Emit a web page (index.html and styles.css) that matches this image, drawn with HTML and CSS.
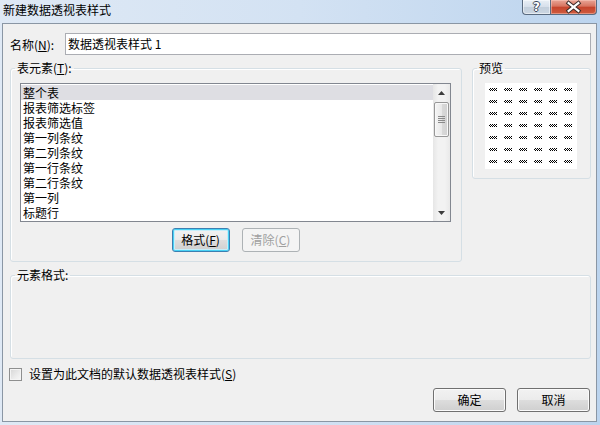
FILE: index.html
```html
<!DOCTYPE html>
<html lang="zh-CN">
<head>
<meta charset="utf-8">
<title>新建数据透视表样式</title>
<link rel="stylesheet" href="styles.css">
</head>
<body>
<div class="window">
  <div class="titlebar">
    <span class="title">新建数据透视表样式</span>
    <div class="caption">
      <div class="cap help"><span class="qmark">?</span></div>
      <div class="cap close">
        <svg width="46" height="14" viewBox="0 0 46 14">
          <path d="M18 3 L28 11 M28 3 L18 11" stroke="#3a2a28" stroke-width="4.2" stroke-linecap="square" fill="none"/>
          <path d="M18 3 L28 11 M28 3 L18 11" stroke="#ffffff" stroke-width="2.2" stroke-linecap="square" fill="none"/>
        </svg>
      </div>
    </div>
  </div>
  <div class="client">
    <div class="name-row">
      <span class="name-label">名称(<u>N</u>):</span>
      <div class="input">数据透视表样式 1</div>
    </div>
    <div class="groups">
      <fieldset class="grp elements">
        <legend>表元素(<u>T</u>):</legend>
        <div class="elements-body">
          <div class="listbox">
            <ul class="items">
              <li class="sel">整个表</li>
              <li>报表筛选标签</li>
              <li>报表筛选值</li>
              <li>第一列条纹</li>
              <li>第二列条纹</li>
              <li>第一行条纹</li>
              <li>第二行条纹</li>
              <li>第一列</li>
              <li>标题行</li>
            </ul>
            <div class="scrollbar">
              <div class="arrow"><svg width="7" height="4" viewBox="0 0 7 4"><polygon points="0,4 3.5,0 7,4" fill="#3c3c3c"/></svg></div>
              <div class="thumb">
                <svg width="7" height="7" viewBox="0 0 7 7"><path d="M0 0.5H7M0 2.5H7M0 4.5H7M0 6.5H7" stroke="#8a8a8a" stroke-width="1"/></svg>
              </div>
              <div class="track"></div>
              <div class="arrow"><svg width="7" height="4" viewBox="0 0 7 4"><polygon points="0,0 7,0 3.5,4" fill="#3c3c3c"/></svg></div>
            </div>
          </div>
          <div class="btn-row">
            <button class="btn default">格式(<u>F</u>)</button>
            <button class="btn" disabled>清除(<u>C</u>)</button>
          </div>
        </div>
      </fieldset>
      <fieldset class="grp preview">
        <legend>预览</legend>
        <div class="preview-body">
          <div class="preview-box">
            <i></i><i></i><i></i><i></i><i></i><i></i>
            <i></i><i></i><i></i><i></i><i></i><i></i>
            <i></i><i></i><i></i><i></i><i></i><i></i>
            <i></i><i></i><i></i><i></i><i></i><i></i>
            <i></i><i></i><i></i><i></i><i></i><i></i>
            <i></i><i></i><i></i><i></i><i></i><i></i>
            <i></i><i></i><i></i><i></i><i></i><i></i>
          </div>
        </div>
      </fieldset>
    </div>
    <fieldset class="grp format">
      <legend>元素格式:</legend>
    </fieldset>
    <div class="check-row">
      <span class="checkbox"></span>
      <span class="check-label">设置为此文档的默认数据透视表样式(<u>S</u>)</span>
    </div>
    <div class="footer">
      <button class="btn wide">确定</button>
      <button class="btn wide">取消</button>
    </div>
  </div>
</div>
</body>
</html>
```
FILE: styles.css
```css
html, body {
  margin: 0;
  padding: 0;
}
body {
  width: 600px;
  height: 425px;
  overflow: hidden;
  font-family: "Noto Sans CJK SC", "Microsoft YaHei", sans-serif;
  font-size: 12px;
  color: #000;
}
.window {
  width: 600px;
  height: 425px;
  display: flex;
  flex-direction: column;
  background: linear-gradient(to right, #dfe9f5 0%, #d3e2f3 50%, #bcd4ee 100%);
}
.titlebar {
  height: 23px;
  display: flex;
  align-items: flex-start;
  padding: 0 3px 0 3px;
  flex: none;
}
.title {
  flex: 1;
  line-height: 16px;
  padding-top: 2px;
  white-space: nowrap;
}
.caption {
  display: flex;
}
.cap {
  height: 15px;
  box-sizing: border-box;
  border: 1px solid #5a6b80;
  border-top: none;
  display: flex;
  align-items: center;
  justify-content: center;
}
.help {
  width: 28px;
  border-right: none;
  border-radius: 0 0 0 4px;
  background: linear-gradient(#e9eff6 0%, #d6dfea 50%, #c3cfdc 51%, #cbd6e2 100%);
  box-shadow: inset 0 0 0 1px rgba(255,255,255,0.5);
}
.qmark {
  font-family: "DejaVu Sans", sans-serif;
  font-weight: bold;
  font-size: 12px;
  line-height: 13px;
  color: #fff;
  text-shadow: 1px 0 0 #39475a, -1px 0 0 #39475a, 0 1px 0 #39475a, 0 -1px 0 #39475a;
}
.close {
  width: 47px;
  border-radius: 0 0 4px 0;
  background: linear-gradient(#e8a597 0%, #d7735f 45%, #c5432c 50%, #cf5c3f 100%);
  box-shadow: inset 0 0 0 1px rgba(255,210,200,0.45);
}
.close svg {
  display: block;
}
.client {
  flex: 1;
  margin: 0 3px 3px 2px;
  border: 1px solid #8a96a4;
  background: #f0f0f0;
  display: flex;
  flex-direction: column;
}
.name-row {
  display: flex;
  align-items: center;
  height: 22px;
  margin: 9px 5px 0 7px;
}
.name-label {
  width: 55px;
  flex: none;
}
.input {
  flex: 1;
  height: 22px;
  box-sizing: border-box;
  border: 1px solid #abadb3;
  background: #fff;
  padding-left: 2px;
  line-height: 20px;
}
.groups {
  display: flex;
  align-items: flex-start;
  gap: 10px;
  margin: 5px 5px 0 7px;
}
fieldset.grp {
  margin: 0;
  padding: 0;
  border: 1px solid #d5dfe5;
  border-radius: 3px;
  min-width: 0;
  box-sizing: border-box;
  box-shadow: inset 1px 1px 0 #fff;
}
fieldset.grp legend {
  padding: 0 2px;
  margin-left: 4px;
  line-height: 16px;
}
.elements {
  width: 452px;
}
.elements-body {
  padding: 7px 10px 9px 9px;
}
.listbox {
  height: 139px;
  box-sizing: border-box;
  border: 1px solid #828790;
  background: #fff;
  display: flex;
}
.items {
  flex: 1;
  list-style: none;
  margin: 0;
  padding: 1px 0 0 0;
  overflow: hidden;
}
.items li {
  height: 15px;
  line-height: 15px;
  padding-left: 2px;
  white-space: nowrap;
}
.items li.sel {
  background: #dedee3;
}
.scrollbar {
  width: 17px;
  flex: none;
  display: flex;
  flex-direction: column;
  align-items: center;
  background: linear-gradient(to right, #e6e6e6, #f2f2f2 30%, #f2f2f2 70%, #e9e9e9);
}
.arrow {
  height: 17px;
  width: 17px;
  display: flex;
  align-items: center;
  justify-content: center;
  flex: none;
}
.arrow svg {
  display: block;
}
.thumb {
  width: 15px;
  height: 35px;
  box-sizing: border-box;
  margin-top: 1px;
  border: 1px solid #979797;
  border-radius: 2px;
  background: linear-gradient(to right, #f5f5f5 0%, #e9e9e9 50%, #d9d9d9 51%, #d2d2d2 100%);
  box-shadow: inset 0 0 0 1px #f8f8f8;
  display: flex;
  align-items: center;
  justify-content: center;
  flex: none;
}
.thumb svg {
  display: block;
}
.track {
  flex: 1;
}
.btn-row {
  display: flex;
  justify-content: center;
  gap: 12px;
  margin-top: 6px;
}
.btn {
  width: 58px;
  height: 24px;
  box-sizing: border-box;
  padding: 0;
  border: 1px solid #707070;
  border-radius: 3px;
  background: linear-gradient(#f2f2f2 0%, #ebebeb 50%, #dddddd 51%, #cfcfcf 100%);
  box-shadow: inset 0 0 0 1px #fbfbfb;
  font-family: inherit;
  font-size: 12px;
  color: #000;
  line-height: 20px;
}
.btn.default {
  border-color: #3c7fb1;
  box-shadow: inset 0 0 0 1px #48d1f4, inset 0 0 0 2px #c6eefa;
}
.btn:disabled {
  border-color: #adb2b5;
  background: #f4f4f4;
  box-shadow: none;
  color: #a0a0a0;
}
.btn.wide {
  width: 73px;
}
.preview {
  width: 119px;
}
.preview-body {
  padding: 7px 13px 9px 12px;
}
.preview-box {
  width: 92px;
  height: 86px;
  box-sizing: border-box;
  background: #fff;
  padding: 5px 0 0 4px;
  display: grid;
  grid-template-columns: repeat(6, 8px);
  grid-auto-rows: 3px;
  column-gap: 7px;
  row-gap: 9px;
}
.preview-box i {
  display: block;
  width: 8px;
  height: 3px;
  background: repeating-conic-gradient(#000 0 25%, #fff 0 50%) 0 0 / 2px 2px;
}
fieldset.grp.format {
  height: 92px;
  margin: 5px 5px 0 7px;
}
.check-row {
  display: flex;
  align-items: center;
  height: 16px;
  margin: 7px 0 0 6px;
}
.checkbox {
  width: 13px;
  height: 13px;
  box-sizing: border-box;
  border: 1px solid #8e8f8f;
  background: linear-gradient(135deg, #d6d6d6 0%, #ececec 60%, #f8f8f8 100%);
  box-shadow: inset 0 0 0 1px #f4f4f4;
  flex: none;
}
.check-label {
  margin-left: 7px;
  line-height: 16px;
}
.footer {
  display: flex;
  justify-content: flex-end;
  gap: 11px;
  margin: 6px 6px 0 0;
}
```
